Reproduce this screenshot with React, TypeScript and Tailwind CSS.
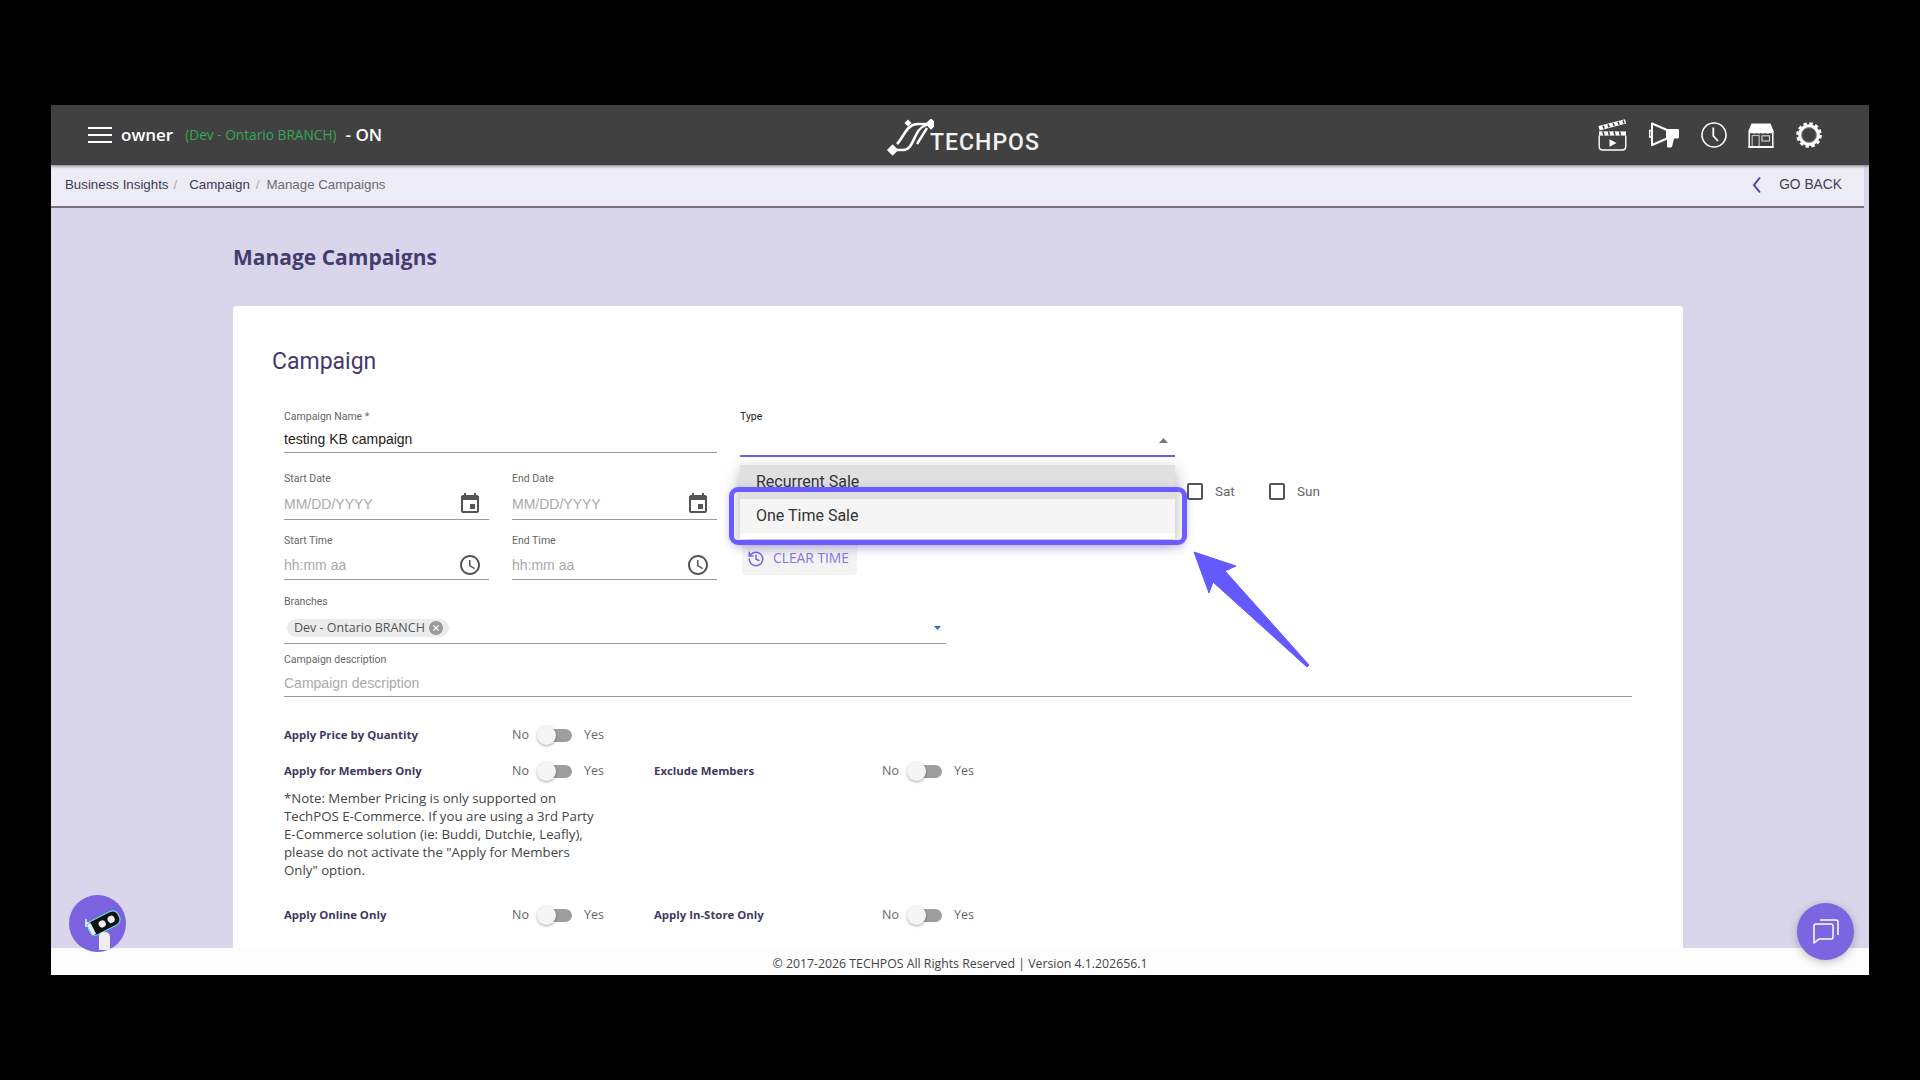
import React from "react";
import { History } from "lucide-react";

const roboto = "font-['Roboto',sans-serif]";
const open = "font-['Open_Sans',sans-serif]";
const arial = "font-['Liberation_Sans',sans-serif]";

function CalendarIcon() {
  return (
    <svg width="24" height="24" viewBox="0 0 24 24" fill="#555">
      <path d="M17 12h-5v5h5v-5zM16 1v2H8V1H6v2H5c-1.11 0-1.99.9-1.99 2L3 19c0 1.1.89 2 2 2h14c1.1 0 2-.9 2-2V5c0-1.1-.9-2-2-2h-1V1h-2zm3 18H5V8h14v11z" />
    </svg>
  );
}

function TimeIcon() {
  return (
    <svg width="24" height="24" viewBox="0 0 24 24" fill="#555">
      <path d="M11.99 2C6.47 2 2 6.48 2 12s4.47 10 9.99 10C17.52 22 22 17.52 22 12S17.52 2 11.99 2zM12 20c-4.42 0-8-3.58-8-8s3.58-8 8-8 8 3.58 8 8-3.58 8-8 8z" />
      <path d="M12.5 7H11v6l5.25 3.15.75-1.23-4.5-2.67z" />
    </svg>
  );
}

function Clapper() {
  return (
    <svg width="29" height="32" viewBox="0 0 29 32" fill="none">
      <path d="M0.5 7 L27 0.3 L28.2 4.6 L1.6 11.4 Z" fill="#fff" />
      <path d="M5 6.6 L6.2 9.6 M10 5.3 L11.2 8.4 M15 4 L16.2 7 M20 2.8 L21.2 5.8 M25 1.5 L26 4.5" stroke="#414141" strokeWidth="1.6" />
      <rect x="1" y="12.4" width="27" height="4.2" fill="#fff" />
      <path d="M5 12.4 L6 16.6 M10.5 12.4 L11.5 16.6 M16 12.4 L17 16.6 M21.5 12.4 L22.5 16.6" stroke="#414141" strokeWidth="1.6" />
      <path d="M1.2 16.6 V27.5 C1.2 29.8 2.6 31 4.8 31 H24.2 C26.4 31 27.8 29.8 27.8 27.5 V16.6" stroke="#fff" strokeWidth="1.4" />
      <path d="M11.5 20.2 L18.5 24 L11.5 27.8 Z" fill="#fff" />
    </svg>
  );
}

function Megaphone() {
  return (
    <svg width="30" height="26" viewBox="0 0 30 26" fill="none">
      <path d="M3 1.5 L18 8 V16.5 L3 23 Z" stroke="#fff" strokeWidth="2" strokeLinejoin="round" />
      <path d="M2.5 8.5 H0.5 V15 H2.5" stroke="#fff" strokeWidth="1.6" />
      <path d="M18 7 H29 Q30 7 30 8 V15 Q30 16.5 28.5 16.5 H25 L23 25 Q20 26 18 25 Z" fill="#fff" />
    </svg>
  );
}

function HeadClock() {
  return (
    <svg width="26" height="26" viewBox="0 0 26 26" fill="none" stroke="#fff">
      <circle cx="13" cy="13" r="12" strokeWidth="1.6" />
      <path d="M12.3 5.5 V14 L17 19" strokeWidth="1.8" />
    </svg>
  );
}

function StoreIcon() {
  return (
    <svg width="26" height="25" viewBox="0 0 26 25" fill="none">
      <path d="M3.5 0.5 H22.5 L26 9 Q24.5 11 22 10 Q19.5 11.2 17.3 10 Q15 11.2 13 10 Q10.8 11.2 8.6 10 Q6.3 11.2 4 10 Q1.5 11 0 9 Z" fill="#fff" />
      <path d="M1.2 10 V24 H24.8 V10" stroke="#fff" strokeWidth="1.5" />
      <rect x="4.2" y="12.5" width="7" height="11.5" stroke="#bbb" strokeWidth="1.2" />
      <rect x="14" y="12.8" width="7.5" height="5.2" stroke="#ccc" strokeWidth="1.2" />
      <rect x="0.5" y="23" width="25" height="2" fill="#fff" />
    </svg>
  );
}

function Gear() {
  return (
    <svg width="26" height="26" viewBox="0 0 27 27" fill="none">
      <circle cx="13.5" cy="13.5" r="12" stroke="#fff" strokeWidth="2.6" strokeDasharray="3.6 2.68" />
      <circle cx="13.5" cy="13.5" r="9.6" stroke="#fff" strokeWidth="3.2" />
      <circle cx="13.5" cy="13.5" r="7.6" stroke="#a8a8a8" strokeWidth="0.7" />
    </svg>
  );
}

function Logo() {
  return (
    <div className="flex items-end ml-[6px] mt-[1px] h-[40px]">
      <svg width="48" height="38" viewBox="0 0 48 38" fill="none" className="mb-[-1px]">
        <path d="M7 31 H17 C24 31 26 24 30 16 C33 9 37 6 45 5" stroke="#fff" strokeWidth="2.6" />
        <path d="M11 25 C18 18 20 6 31 5 H45" stroke="#fff" strokeWidth="2.6" />
        <path d="M41 9 L31 25" stroke="#fff" strokeWidth="2.4" />
        <rect x="2.6" y="27" width="8" height="8" transform="rotate(45 6.6 31)" fill="#fff" />
        <rect x="41" y="1" width="8" height="8" transform="rotate(45 45 5)" fill="#fff" />
        <rect x="19.5" y="1.5" width="5" height="5" transform="rotate(45 22 4)" fill="#fff" />
      </svg>
      <span className={`text-[23px] leading-[24px] mb-[1px] text-[#f2f2f2] font-medium tracking-[1px] ml-[-4px] ${roboto}`}>
        TECHPOS
      </span>
    </div>
  );
}

function Field({ label, value, placeholder, icon, height }: { label: string; value?: string; placeholder?: string; icon?: React.ReactNode; height: string }) {
  return (
    <div className={`flex flex-col ${height} border-b border-[#9c9c9c]`}>
      <div className={`h-[14px] leading-[14px] text-[10.5px] text-[#666] ${roboto}`}>{label}</div>
      <div className="flex-1 flex items-center justify-between pr-[7px] pt-[3px]">
        {value ? (
          <span className={`text-[14px] text-[#222] ${arial}`}>{value}</span>
        ) : (
          <span className={`text-[14px] text-[#aaa] ${arial}`}>{placeholder}</span>
        )}
        {icon}
      </div>
    </div>
  );
}

function Switch() {
  return (
    <div className="relative w-[36px] h-[18px] flex items-center">
      <div className="ml-[5px] w-[30px] h-[13px] rounded-full bg-[#9e9e9e]" />
      <div className="absolute left-0 top-0 w-[19px] h-[19px] rounded-full bg-[#f5f5f5] shadow-[0_1px_3px_rgba(0,0,0,0.35)]" />
    </div>
  );
}

function Toggle({ label }: { label: string }) {
  return (
    <div className={`flex items-center h-[24px] ${open}`}>
      <div className="w-[228px] text-[11.4px] font-bold text-[#3f3862]">{label}</div>
      <div className="w-[25px] text-[12.5px] text-[#666]">No</div>
      <Switch />
      <div className="ml-[11px] text-[12.5px] text-[#666]">Yes</div>
    </div>
  );
}

function Check({ label }: { label: string }) {
  return (
    <div className="flex items-center w-[82px]">
      <div className="w-[16px] h-[17px] border-2 border-[#555] rounded-[2px]" />
      <span className={`ml-[12px] text-[13.5px] text-[#666] ${roboto}`}>{label}</span>
    </div>
  );
}

export default function App() {
  return (
    <div className="w-full h-[1080px] bg-black pt-[105px] pl-[51px] overflow-hidden">
      <div className="relative w-[1818px] h-[870px] flex flex-col overflow-hidden bg-[#d9d6ec]">
        <header className={`h-[60px] shrink-0 bg-[#414141] grid grid-cols-[1fr_auto_1fr] items-center shadow-[0_1px_3px_rgba(0,0,0,0.5)] z-10 ${open}`}>
          <div className="flex items-center pl-[37px] text-white">
            <div className="flex flex-col gap-[5px] w-[24px]">
              <span className="h-[2px] bg-white" />
              <span className="h-[2px] bg-white" />
              <span className="h-[2px] bg-white" />
            </div>
            <span className="ml-[9px] text-[17px] font-semibold">owner</span>
            <span className="ml-[12px] text-[13.7px] text-[#35a853]">(Dev - Ontario BRANCH)</span>
            <span className="ml-[9px] text-[17px] font-semibold">- ON</span>
          </div>
          <Logo />
          <div className="flex items-center justify-end gap-[22px] pr-[47px]">
            <Clapper />
            <Megaphone />
            <HeadClock />
            <div className="ml-[-1px]"><StoreIcon /></div>
            <Gear />
          </div>
        </header>

        <div className={`h-[43px] shrink-0 mr-[5px] bg-[#ecebf6] border-b-2 border-[#7f7088] flex items-center justify-between pl-[14px] pr-[22px] text-[13.3px] ${arial}`}>
          <div className="flex items-center text-[#3d3a55] mt-[-2px]">
            <span>Business Insights</span>
            <span className="ml-[5px] text-[#aaa]">/</span>
            <span className="ml-[12px]">Campaign</span>
            <span className="ml-[6px] text-[#aaa]">/</span>
            <span className="ml-[7px] text-[#6d6a78]">Manage Campaigns</span>
          </div>
          <div className="flex items-center text-[#444159] text-[13.8px]">
            <svg className="mt-[-2px]" width="12" height="18" viewBox="0 0 12 18" fill="none" stroke="#4f3ea8" strokeWidth="2">
              <path d="M9 1.5 L3 9 L9 16.5" />
            </svg>
            <span className="ml-[16px]">GO BACK</span>
          </div>
        </div>

        <main className="flex-1 min-h-0 overflow-hidden pl-[182px] pr-[186px]">
          <h1 className={`mt-[36px] h-[26px] leading-[26px] text-[21px] font-bold text-[#443b6e] ${open}`}>Manage Campaigns</h1>
          <section className="mt-[36px] bg-white rounded-t-[4px] pl-[39px] pt-[41px] h-[700px]">
            <h2 className={`h-[30px] leading-[30px] text-[23px] text-[#44396e] ${roboto}`}>Campaign</h2>
            <div className="ml-[12px] w-[1348px] mt-[33px]">
              <div className="flex gap-[23px]">
                <div className="w-[433px] shrink-0">
                  <Field label="Campaign Name *" value="testing KB campaign" height="h-[43px]" />
                  <div className="mt-[19px] flex gap-[23px]">
                    <div className="w-[205px]">
                      <Field label="Start Date" placeholder="MM/DD/YYYY" icon={<CalendarIcon />} height="h-[48px]" />
                    </div>
                    <div className="w-[205px]">
                      <Field label="End Date" placeholder="MM/DD/YYYY" icon={<CalendarIcon />} height="h-[48px]" />
                    </div>
                  </div>
                  <div className="mt-[14px] flex gap-[23px]">
                    <div className="w-[205px]">
                      <Field label="Start Time" placeholder="hh:mm aa" icon={<TimeIcon />} height="h-[46px]" />
                    </div>
                    <div className="w-[205px]">
                      <Field label="End Time" placeholder="hh:mm aa" icon={<TimeIcon />} height="h-[46px]" />
                    </div>
                  </div>
                </div>

                <div className="relative flex-1">
                  <div className="w-[435px] h-[47px] border-b-2 border-[#6c5ce7] flex flex-col">
                    <div className={`h-[14px] leading-[14px] text-[10.5px] text-[#222] ${roboto}`}>Type</div>
                    <div className="flex-1 flex items-center justify-end pr-[7px] pt-[2px]">
                      <svg width="9" height="5" viewBox="0 0 9 5" fill="#777"><path d="M4.5 0 L9 5 H0 Z" /></svg>
                    </div>
                  </div>
                  <div className="flex ml-[447px] mt-[24px]">
                    <Check label="Sat" />
                    <Check label="Sun" />
                  </div>
                  <button className={`mt-[41px] ml-[2px] w-[115px] h-[33px] bg-[#f3f3f3] rounded-[3px] flex items-center pl-[5px] text-[13.8px] text-[#8a74e8] ${open}`}>
                    <History size={18} color="#7b65e1" strokeWidth={2} />
                    <span className="ml-[8px]">CLEAR TIME</span>
                  </button>

                  <div className="absolute left-0 top-[55px] w-[435px] h-[74px] bg-white shadow-[0_5px_14px_rgba(0,0,0,0.3)] z-10">
                    <div className={`h-[34px] bg-[#e0e0e0] pl-[16px] flex items-center text-[16px] text-[#333] ${roboto}`}>Recurrent Sale</div>
                    <div className={`h-[34px] bg-[#f5f5f5] pl-[16px] flex items-center text-[16px] text-[#333] ${roboto}`}>One Time Sale</div>
                  </div>
                  <div className="absolute left-[-11px] top-[77px] w-[458px] h-[58px] border-[5px] border-[#6c5cff] rounded-[9px] z-20 shadow-[0_2px_8px_rgba(108,92,255,0.3)]" />
                  <svg className="absolute left-[450px] top-[137px] z-20" width="124" height="124" viewBox="0 0 124 124" fill="#6459ff" stroke="#6459ff" strokeWidth="1" strokeLinejoin="round">
                    <path d="M4 5 L46 19 L35 24 L119 118 L117 120 L23 35 L19 46 Z" />
                  </svg>
                </div>
              </div>

              <div className="mt-[15px] w-[662px] h-[49px] border-b border-[#9c9c9c] flex flex-col relative">
                <div className={`h-[14px] leading-[14px] text-[10.5px] text-[#666] ${roboto}`}>Branches</div>
                <div className="flex-1 flex items-start justify-between pt-[10px] pl-[3px] pr-[5px]">
                  <div className={`h-[18px] w-[162px] rounded-full bg-[#ebebeb] flex items-center pl-[7px] text-[12.5px] text-[#555] ${open}`}>
                    <span>Dev - Ontario BRANCH</span>
                    <svg className="ml-[4px]" width="14" height="14" viewBox="0 0 14 14">
                      <circle cx="7" cy="7" r="7" fill="#999" />
                      <path d="M4.4 4.4 L9.6 9.6 M9.6 4.4 L4.4 9.6" stroke="#fff" strokeWidth="1.3" />
                    </svg>
                  </div>
                  <svg className="mt-[7px]" width="7" height="4" viewBox="0 0 7 4" fill="#1976d2"><path d="M0 0 H7 L3.5 4 Z" /></svg>
                </div>
              </div>

              <div className="mt-[9px]">
                <Field label="Campaign description" placeholder="Campaign description" height="h-[44px]" />
              </div>

              <div className="mt-[26px]">
                <Toggle label="Apply Price by Quantity" />
                <div className="mt-[12px] flex">
                  <div className="w-[370px]"><Toggle label="Apply for Members Only" /></div>
                  <Toggle label="Exclude Members" />
                </div>
                <p className={`mt-[6px] w-[314px] text-[13.25px] leading-[18px] text-[#444] ${open}`}>
                  *Note: Member Pricing is only supported on TechPOS E-Commerce. If you are using a 3rd Party E-Commerce solution (ie: Buddi, Dutchie, Leafly), please do not activate the "Apply for Members Only" option.
                </p>
                <div className="mt-[24px] flex">
                  <div className="w-[370px]"><Toggle label="Apply Online Only" /></div>
                  <Toggle label="Apply In-Store Only" />
                </div>
              </div>
            </div>
          </section>
        </main>

        <footer className={`h-[27px] shrink-0 bg-[#fcfcfc] flex items-center justify-center pt-[6px] text-[12.3px] text-[#444] ${open}`}>
          © 2017-2026 TECHPOS All Rights Reserved | Version 4.1.202656.1
        </footer>

        <div className="absolute left-[18px] top-[790px] w-[57px] h-[57px] rounded-full bg-[#7b63e0] z-30">
          <svg width="57" height="57" viewBox="0 0 57 57" fill="none">
            <path d="M17 24 V32 M17 28 H22" stroke="#fff" strokeWidth="1.4" />
            <g transform="rotate(-27 35 28)">
              <rect x="18.5" y="20.5" width="33" height="15" rx="6" fill="#111" stroke="#5fe0e6" strokeWidth="1.2" />
              <rect x="19" y="22" width="4" height="12" fill="#d8f4f5" />
              <circle cx="33" cy="28" r="3.6" fill="#eee" />
              <circle cx="43" cy="28" r="3.6" fill="#eee" />
            </g>
            <path d="M30 55 V42 Q30 37 35.5 37 Q41 37 41 42 V55 Z" fill="#eee" />
          </svg>
        </div>

        <div className="absolute left-[1746px] top-[798px] w-[57px] h-[57px] rounded-full bg-[#7b65e1] shadow-[0_2px_8px_rgba(0,0,0,0.25)] flex items-center justify-center z-30">
          <svg width="26" height="25" viewBox="0 0 26 25" fill="none" stroke="#fff" strokeWidth="1.5" strokeLinejoin="round">
            <path d="M1 7 Q1 5 3 5 H18 Q20 5 20 7 V18 Q20 20 18 20 H6 L1 24 Z" />
            <path d="M7 1 H23 Q25 1 25 3 V16" />
          </svg>
        </div>
      </div>
    </div>
  );
}
